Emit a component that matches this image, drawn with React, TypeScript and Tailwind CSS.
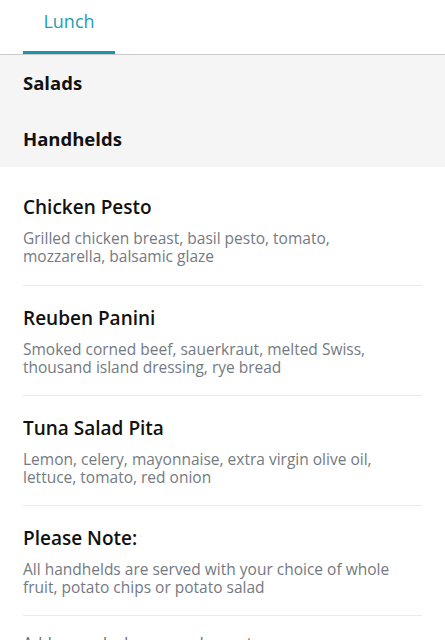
import React from 'react';

const items = [
  {
    name: 'Chicken Pesto',
    desc: 'Grilled chicken breast, basil pesto, tomato, mozzarella, balsamic glaze',
  },
  {
    name: 'Reuben Panini',
    desc: 'Smoked corned beef, sauerkraut, melted Swiss, thousand island dressing, rye bread',
  },
  {
    name: 'Tuna Salad Pita',
    desc: 'Lemon, celery, mayonnaise, extra virgin olive oil, lettuce, tomato, red onion',
  },
  {
    name: 'Please Note:',
    desc: 'All handhelds are served with your choice of whole fruit, potato chips or potato salad',
  },
];

export default function App() {
  return (
    <div
      className="w-[445px] h-[640px] overflow-hidden bg-white text-[#111]"
      style={{ fontFamily: '"Open Sans", Lato, sans-serif' }}
    >
      {/* Tabs */}
      <div className="h-[55px] flex border-b border-[#c9c9c9]">
        <div className="ml-[23px] w-[92px] flex flex-col">
          <div className="flex-1 flex items-center justify-center pb-[8px] text-[18px] text-[#1f9db2]">
            Lunch
          </div>
          <div className="h-[3px] bg-[#1a96ab]" />
        </div>
      </div>

      {/* Categories */}
      <div className="bg-[#f5f5f5]">
        <div className="h-14 flex items-center px-[23px] text-[18.5px] font-bold">Salads</div>
        <div className="h-14 flex items-center px-[23px] text-[18.5px] font-bold">Handhelds</div>
      </div>

      {/* Items */}
      <div className="px-[23px]">
        {items.map((item, i) => (
          <div
            key={item.name}
            className={i === 0 ? 'pt-[28px] pb-[20px] border-b border-[#ebebeb]' : 'pt-[20px] pb-[19px] border-b border-[#ebebeb]'}
          >
            <div className="text-[19px] leading-[24px] font-semibold">{item.name}</div>
            <div className="mt-[10px] text-[15.5px] leading-[18px] text-[#747a82] pr-[20px]">{item.desc}</div>
          </div>
        ))}
        <div className="pt-[18px]">
          <div className="text-[15.5px] leading-[18px] text-[#666]">Add avocado, bacon or cheese to any</div>
        </div>
      </div>
    </div>
  );
}
